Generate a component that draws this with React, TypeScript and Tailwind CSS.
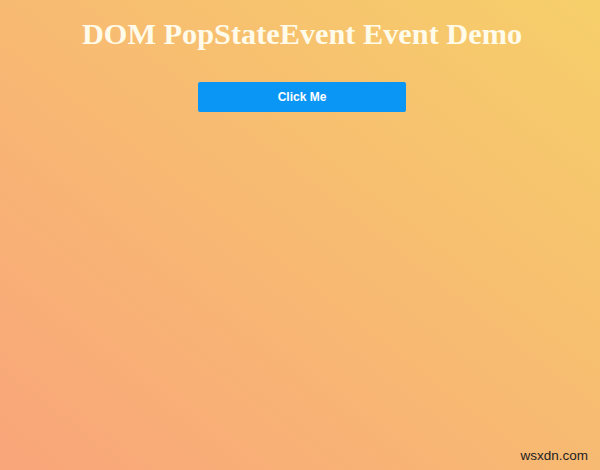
export default function App() {
  return (
    <div className="relative w-[600px] h-[470px] overflow-hidden bg-[linear-gradient(to_top_right,#f9a57a,#f6cf6a)]">
      <div className="flex flex-col items-center pt-[17px] pl-[4px]">
        <h1 className="text-[30.3px] leading-[34px] font-bold text-[#fffbea] font-['Liberation_Serif',serif]">
          DOM PopStateEvent Event Demo
        </h1>
        <button className="mt-[31px] w-[208px] h-[30px] rounded-[2px] bg-[#0a96f5] text-white text-[12px] font-bold font-['Liberation_Sans',Arial,sans-serif]">
          Click Me
        </button>
      </div>
      <span className="absolute right-[12px] bottom-[4px] text-[13.5px] text-[#222] font-['Liberation_Sans',Arial,sans-serif]">
        wsxdn.com
      </span>
    </div>
  );
}
